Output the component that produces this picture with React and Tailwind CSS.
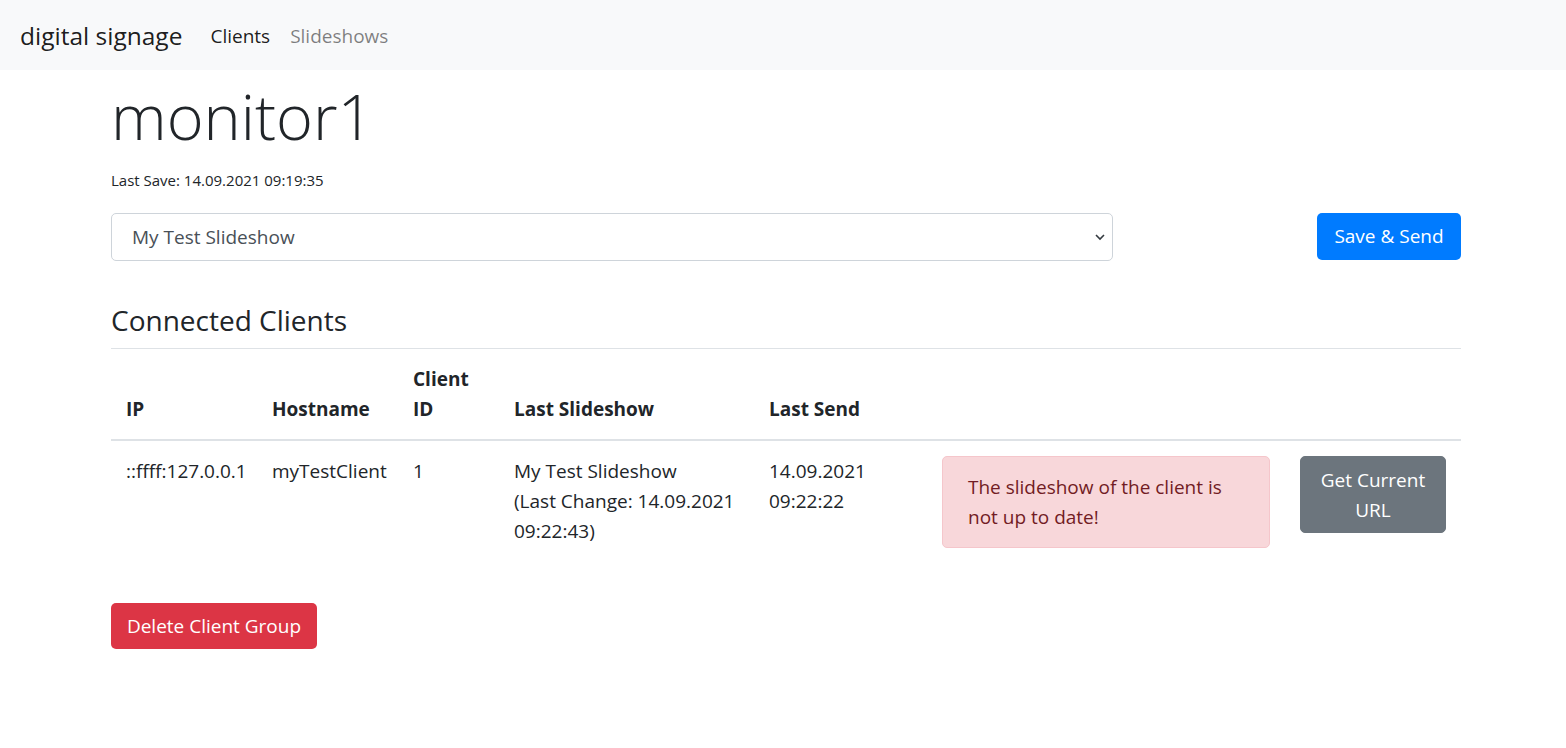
import { useState } from "react";

const clients = [
  {
    ip: "::ffff:127.0.0.1",
    hostname: "myTestClient",
    id: "1",
    slideshow: "My Test Slideshow",
    lastChange: "(Last Change: 14.09.2021 09:22:43)",
    lastSend: "14.09.2021 09:22:22",
    upToDate: false,
  },
];

const Navbar = () => (
  <nav className="flex items-center h-[70px] px-5 pt-[1px] bg-[#f8f9fa]">
    <a className="text-[24.5px] leading-[37.5px] py-[6px] mr-[18px] text-black/90">digital signage</a>
    <a className="text-[19px] leading-[30px] px-[10px] py-[10px] text-black/90">Clients</a>
    <a className="text-[19px] leading-[30px] px-[10px] py-[10px] text-black/50">Slideshows</a>
  </nav>
);

const ClientsTable = () => (
  <table className="w-full table-fixed border-collapse text-[19px] leading-[30px] text-[#212529] mb-5">
    <thead>
      <tr className="align-bottom text-left">
        <th className="w-[146px] p-[15px] font-bold border-t border-b-[2.5px] border-[#dee2e6]">IP</th>
        <th className="w-[141px] p-[15px] font-bold border-t border-b-[2.5px] border-[#dee2e6]">Hostname</th>
        <th className="w-[101px] p-[15px] font-bold border-t border-b-[2.5px] border-[#dee2e6]">Client ID</th>
        <th className="w-[255px] p-[15px] font-bold border-t border-b-[2.5px] border-[#dee2e6]">Last Slideshow</th>
        <th className="w-[173px] p-[15px] font-bold border-t border-b-[2.5px] border-[#dee2e6]">Last Send</th>
        <th className="w-[358px] p-[15px] border-t border-b-[2.5px] border-[#dee2e6]"></th>
        <th className="w-[176px] p-[15px] border-t border-b-[2.5px] border-[#dee2e6]"></th>
      </tr>
    </thead>
    <tbody>
      {clients.map((c) => (
        <tr key={c.id} className="align-top">
          <td className="p-[15px]">{c.ip}</td>
          <td className="p-[15px]">{c.hostname}</td>
          <td className="p-[15px]">{c.id}</td>
          <td className="p-[15px]">
            {c.slideshow}
            <br />
            {c.lastChange}
          </td>
          <td className="p-[15px]">{c.lastSend}</td>
          <td className="p-[15px]">
            {!c.upToDate && (
              <div className="mb-5 px-[25px] py-[15px] border border-[#f5c6cb] bg-[#f8d7da] text-[#721c24] rounded-[5px]">
                The slideshow of the client is not up to date!
              </div>
            )}
          </td>
          <td className="p-[15px]">
            <button
              type="button"
              className="w-full px-[15px] py-[7.5px] border border-[#6c757d] bg-[#6c757d] text-white rounded-[5px] text-center"
            >
              Get Current URL
            </button>
          </td>
        </tr>
      ))}
    </tbody>
  </table>
);

export default function App() {
  const [slideshow, setSlideshow] = useState("My Test Slideshow");

  return (
    <div className="min-h-[748px] bg-white font-['Open_Sans',sans-serif] text-[#212529]">
      <Navbar />
      <div className="w-[1350px] ml-[111px]">
        <h1 className="mt-[4px] text-[63px] leading-[84px] font-light mb-[7px]">monitor1</h1>
        <p className="text-[15px] leading-[30px] mb-[18px]">Last Save: 14.09.2021 09:19:35</p>

        <div className="flex justify-between items-start">
          <div className="relative w-[1002px]">
            <select
              value={slideshow}
              onChange={(e) => setSlideshow(e.target.value)}
              className="appearance-none w-full h-[48px] pl-[20px] pr-10 text-[19px] text-[#495057] bg-white border border-[#ced4da] rounded-[5px]"
            >
              <option>My Test Slideshow</option>
            </select>
            <svg
              className="absolute right-[7px] top-[19px] pointer-events-none"
              width="12"
              height="10"
              viewBox="0 0 12 10"
              fill="none"
              stroke="#343a40"
              strokeWidth="1.6"
            >
              <path d="M2 3l4 4 4-4" />
            </svg>
          </div>
          <button
            type="button"
            className="h-[47px] w-[144px] text-[19px] text-white bg-[#007bff] rounded-[5px]"
          >
            Save &amp; Send
          </button>
        </div>

        <h3 className="mt-[42px] mb-[11px] text-[28px] leading-[34px]">Connected Clients</h3>
        <ClientsTable />

        <button
          type="button"
          className="h-[46px] w-[206px] text-[19px] text-white bg-[#dc3545] rounded-[5px]"
        >
          Delete Client Group
        </button>
      </div>
    </div>
  );
}
